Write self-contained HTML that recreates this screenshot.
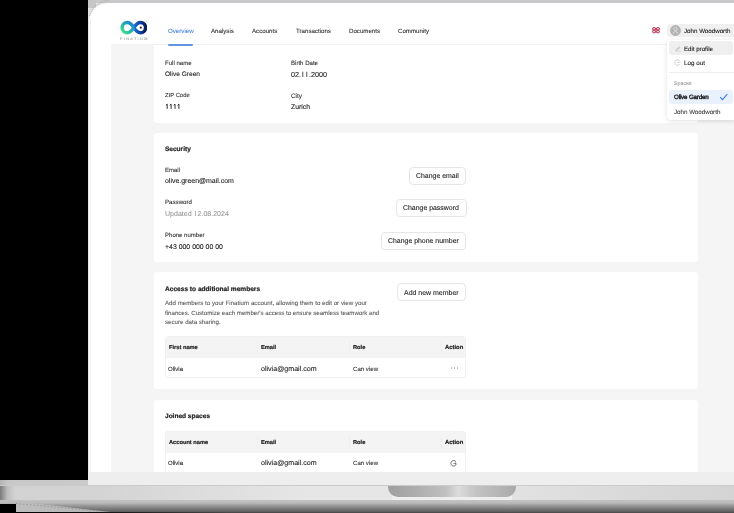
<!DOCTYPE html>
<html><head><meta charset="utf-8">
<style>
*{box-sizing:border-box}
html,body{margin:0;padding:0}
body{width:734px;height:513px;overflow:hidden;background:#000;position:relative;font-family:"Liberation Sans",sans-serif;color:#222}
.a{position:absolute}
.t{position:absolute;white-space:nowrap;line-height:1;will-change:transform;-webkit-text-stroke:0.1px currentColor;text-rendering:geometricPrecision}
.btn{background:#fff;border:1px solid #e6e6e6;border-radius:4px}
.tbl{position:absolute;left:165.4px;width:300.2px;border:1px solid #f0f0f0;border-radius:3px;background:#fff;overflow:hidden}
.th{position:absolute;left:0;top:0;width:100%;height:20.5px;background:#f4f4f4}
.cd{position:absolute;top:4px;width:1px;height:13px;background:#eeeeee}
.o{display:inline-block;width:0.556em;padding-left:0.15em}
</style></head><body>

<!-- laptop top frame -->
<div class="a" style="left:88px;top:0;width:26px;height:26px;background:#e2e2e2"></div>
<div class="a" style="left:88px;top:0;width:646px;height:3px;background:#c8c8ca"></div>
<div class="a" style="left:88px;top:0;width:8px;height:8px;background:#c6c6c6"></div>
<div class="a" style="left:0;top:480px;width:88px;height:6px;background:#c8c8c8"></div>

<!-- screen -->
<div class="a" style="left:88px;top:2.6px;width:660px;height:469.4px;background:#fff;border-top-left-radius:20px;border-left:1px solid #e6e6e6"></div>
<svg class="a" style="left:88px;top:0" width="24" height="20" viewBox="0 0 24 20"><path d="M1.5 16 Q5 3 21 0.3" fill="none" stroke="#9a9a9a" stroke-width="0.8" stroke-dasharray="1 1.2"/></svg>

<div class="a" style="left:89.6px;top:18px;width:1.6px;height:454px;background:#efefef"></div>
<!-- page bg -->
<div class="a" style="left:111px;top:45px;width:623px;height:427px;background:#f5f5f5"></div>

<!-- cards -->
<div class="a" style="left:154px;top:40px;width:544px;height:83px;background:#fff;border-radius:3px"></div>
<div class="a" style="left:154px;top:133px;width:544px;height:129px;background:#fff;border-radius:3px"></div>
<div class="a" style="left:154px;top:272px;width:544px;height:117px;background:#fff;border-radius:3px"></div>
<div class="a" style="left:154px;top:400px;width:544px;height:80px;background:#fff;border-radius:3px"></div>

<!-- tables -->
<div class="tbl" style="top:336.3px;height:42px"><div class="th"></div>
 <div class="cd" style="left:90.6px"></div><div class="cd" style="left:183px"></div><div class="cd" style="left:274.6px"></div>
 <div class="a" style="left:284.6px;top:30.2px;width:1.4px;height:1.4px;border-radius:50%;background:#b5b5b5;box-shadow:3px 0 #b5b5b5,6px 0 #b5b5b5"></div>
</div>
<div class="tbl" style="top:431.1px;height:60px"><div class="th"></div>
 <div class="cd" style="left:90.6px"></div><div class="cd" style="left:183px"></div><div class="cd" style="left:274.6px"></div>
</div>
<svg class="a" style="left:450.4px;top:459.6px" width="7" height="7" viewBox="0 0 7 7"><path d="M5.9 1.7 A2.75 2.75 0 1 0 6.2 4.4" fill="none" stroke="#555" stroke-width="0.85"/><path d="M3.5 3.5 H6.1 M5.3 2.7 L6.2 3.5 L5.3 4.3" fill="none" stroke="#555" stroke-width="0.7"/></svg>

<!-- nav -->
<div class="a" style="left:111px;top:3px;width:623px;height:42px;background:#fff;border-bottom:1px solid #f2f2f2"></div>
<div class="a" style="left:168px;top:44px;width:25.3px;height:2px;background:#6494e3;border-radius:1px"></div>

<!-- logo -->
<svg class="a" style="left:119.8px;top:20.05px" width="27.7" height="15.28" viewBox="0 0 29 16">
 <defs>
  <linearGradient id="gl" x1="0" y1="1" x2="1" y2="0"><stop offset="0" stop-color="#46e48a"/><stop offset="0.45" stop-color="#28b4a8"/><stop offset="1" stop-color="#1c78dc"/></linearGradient>
  <linearGradient id="gr" x1="0" y1="0" x2="1" y2="0"><stop offset="0" stop-color="#1b6ee0"/><stop offset="0.55" stop-color="#1040a8"/><stop offset="1" stop-color="#0a1a50"/></linearGradient>
 </defs>
 <path d="M14.5 8 C17 4.2 19 2.6 21.4 2.6 A5.4 5.4 0 0 1 21.4 13.4 C19 13.4 17 11.8 14.5 8" fill="none" stroke="url(#gr)" stroke-width="3.7"/>
 <path d="M14.5 8 C12 4.2 10 2.6 7.6 2.6 A5.4 5.4 0 0 0 7.6 13.4 C10 13.4 12 11.8 14.5 8" fill="none" stroke="url(#gl)" stroke-width="3.7"/>
 <circle cx="21.8" cy="8" r="1.15" fill="#2a2a2a"/>
</svg>
<div class="t" style="left:120.4px;top:37.5px;font-size:3.8px;letter-spacing:1.38px;color:#777;-webkit-text-stroke:0">FINATIUM</div>

<!-- flag -->
<svg class="a" style="left:652.2px;top:27.2px" width="8" height="6.4" viewBox="0 0 80 64"><g fill="#f6c2cb" stroke="#a8183a" stroke-width="9"><rect x="6" y="6" width="30" height="25" rx="10"/><rect x="44" y="6" width="30" height="25" rx="10"/><rect x="6" y="33" width="30" height="25" rx="10"/><rect x="44" y="33" width="30" height="25" rx="10"/></g></svg>

<!-- user pill -->
<div class="a" style="left:666.8px;top:23.6px;width:80px;height:13.5px;background:#f0f0f0;border-radius:4px"></div>
<svg class="a" style="left:670.2px;top:25px" width="11" height="11" viewBox="0 0 11 11"><circle cx="5.5" cy="5.5" r="5.4" fill="#b2b2b2"/><circle cx="5.5" cy="4.1" r="1.7" fill="none" stroke="#e6e6e6" stroke-width="0.75"/><path d="M2.9 8.9 Q3.4 6.6 5.5 6.6 Q7.6 6.6 8.1 8.9" fill="none" stroke="#e6e6e6" stroke-width="0.75"/></svg>

<!-- dropdown -->
<div class="a" style="left:667px;top:40px;width:70px;height:80px;background:#fff;border-radius:4px;box-shadow:0 1px 5px rgba(0,0,0,0.13)"></div>
<div class="a" style="left:669px;top:41px;width:63.6px;height:13.6px;background:#efefef;border-radius:3px"></div>
<svg class="a" style="left:673.5px;top:44.5px" width="8" height="7" viewBox="0 0 8 7"><path d="M1.4 6.1 L1.7 4.6 L5.2 1.1 L6.5 2.4 L3 5.9 Z" fill="#cfcfcf"/><path d="M1.2 6.3 H6.6" stroke="#cfcfcf" stroke-width="0.6"/></svg>
<svg class="a" style="left:674px;top:59px" width="7" height="7" viewBox="0 0 7 7"><path d="M6 2.2 A2.8 2.8 0 1 0 6 4.8" fill="none" stroke="#c4c4c4" stroke-width="0.75"/><path d="M3.4 3.5 H6.4" fill="none" stroke="#c4c4c4" stroke-width="0.75"/></svg>
<div class="a" style="left:669px;top:72px;width:65px;height:1px;background:#eeeeee"></div>
<div class="a" style="left:669px;top:90.4px;width:64px;height:13.4px;background:#e8f1fc;border-radius:3px"></div>
<svg class="a" style="left:719px;top:93px" width="9" height="8" viewBox="0 0 9 8"><path d="M1.2 4.2 L3.5 6.7 L8.3 1.2" fill="none" stroke="#3b7ddd" stroke-width="1.05"/></svg>

<div class="a btn" style="left:408.80px;top:166.70px;width:57.70px;height:18.00px"></div>
<div class="a btn" style="left:395.50px;top:199.00px;width:71.00px;height:18.00px"></div>
<div class="a btn" style="left:380.70px;top:231.70px;width:85.80px;height:18.00px"></div>
<div class="a btn" style="left:396.80px;top:282.70px;width:69.70px;height:18.00px"></div>
<svg class="a" style="left:0;top:0" width="200" height="120" viewBox="0 0 200 120"><path d="M165.90 105.3 L167.20 104.1 V108.9 M169.80 105.3 L171.10 104.1 V108.9 M173.70 105.3 L175.00 104.1 V108.9 M177.60 105.3 L178.90 104.1 V108.9 " fill="none" stroke="#222" stroke-width="0.95"/></svg>
<div class="t" style="left:168.00px;top:29.09px;font-size:6.15px;color:#4a86e0;font-weight:400;transform:scaleY(1.0);transform-origin:0 5.21px;">Overview</div>
<div class="t" style="left:211.00px;top:29.09px;font-size:6.15px;color:#333;font-weight:400;transform:scaleY(1.0);transform-origin:0 5.21px;">Analysis</div>
<div class="t" style="left:251.70px;top:29.09px;font-size:6.15px;color:#333;font-weight:400;transform:scaleY(1.0);transform-origin:0 5.21px;">Accounts</div>
<div class="t" style="left:295.90px;top:29.09px;font-size:6.15px;color:#333;font-weight:400;transform:scaleY(1.0);transform-origin:0 5.21px;">Transactions</div>
<div class="t" style="left:348.70px;top:29.09px;font-size:6.15px;color:#333;font-weight:400;transform:scaleY(1.0);transform-origin:0 5.21px;">Documents</div>
<div class="t" style="left:397.90px;top:29.09px;font-size:6.15px;color:#333;font-weight:400;transform:scaleY(1.0);transform-origin:0 5.21px;">Community</div>
<div class="t" style="left:684.40px;top:28.75px;font-size:6.20px;color:#222;font-weight:400;transform:scaleY(1.0);transform-origin:0 5.25px;">John Woodworth</div>
<div class="t" style="left:684.20px;top:46.90px;font-size:6.14px;color:#222;font-weight:400;transform:scaleY(1.0);transform-origin:0 5.20px;">Edit profile</div>
<div class="t" style="left:684.20px;top:60.68px;font-size:6.29px;color:#222;font-weight:400;transform:scaleY(1.0);transform-origin:0 5.32px;">Log out</div>
<div class="t" style="left:674.00px;top:82.11px;font-size:5.30px;color:#9a9a9a;font-weight:400;transform:scaleY(1.0);transform-origin:0 4.49px;">Spaces</div>
<div class="t" style="left:674.00px;top:95.15px;font-size:6.20px;color:#1a1a1a;font-weight:400;transform:scaleY(1.0);transform-origin:0 5.25px;-webkit-text-stroke:0.38px #1a1a1a;letter-spacing:-0.15px;">Olive Garden</div>
<div class="t" style="left:674.00px;top:109.75px;font-size:6.20px;color:#444;font-weight:400;transform:scaleY(1.0);transform-origin:0 5.25px;">John Woodworth</div>
<div class="t" style="left:165.00px;top:60.88px;font-size:6.05px;color:#333;font-weight:400;transform:scaleY(1.0);transform-origin:0 5.12px;">Full name</div>
<div class="t" style="left:165.00px;top:72.05px;font-size:6.56px;color:#222;font-weight:400;transform:scaleY(1.0);transform-origin:0 5.55px;">Olive Green</div>
<div class="t" style="left:291.20px;top:60.86px;font-size:6.07px;color:#333;font-weight:400;transform:scaleY(1.0);transform-origin:0 5.14px;">Birth Date</div>
<div class="t" style="left:291.20px;top:70.51px;font-size:7.20px;color:#222;font-weight:400;transform:scaleY(1.0);transform-origin:0 6.09px;">02.<span class=o>l</span><span class=o>l</span>.2000</div>
<div class="t" style="left:165.00px;top:94.03px;font-size:5.87px;color:#333;font-weight:400;transform:scaleY(1.0);transform-origin:0 4.97px;">ZIP Code</div>
<div class="t" style="left:291.20px;top:93.60px;font-size:6.38px;color:#333;font-weight:400;transform:scaleY(1.0);transform-origin:0 5.40px;">City</div>
<div class="t" style="left:291.20px;top:104.61px;font-size:6.84px;color:#222;font-weight:400;transform:scaleY(1.0);transform-origin:0 5.79px;">Zurich</div>
<div class="t" style="left:165.00px;top:146.96px;font-size:6.54px;color:#222;font-weight:700;transform:scaleY(1.0);transform-origin:0 5.54px;-webkit-text-stroke:0.2px currentColor;">Security</div>
<div class="t" style="left:165.00px;top:168.12px;font-size:6.00px;color:#333;font-weight:400;transform:scaleY(1.0);transform-origin:0 5.08px;">Email</div>
<div class="t" style="left:165.00px;top:179.01px;font-size:6.96px;color:#222;font-weight:400;transform:scaleY(1.0);transform-origin:0 5.89px;">olive.green@mail.com</div>
<div class="t" style="left:165.00px;top:199.89px;font-size:6.15px;color:#333;font-weight:400;transform:scaleY(1.0);transform-origin:0 5.21px;">Password</div>
<div class="t" style="left:165.00px;top:211.43px;font-size:7.05px;color:#9a9a9a;font-weight:400;transform:scaleY(1.0);transform-origin:0 5.97px;">Updated <span class=o>l</span>2.08.2024</div>
<div class="t" style="left:165.00px;top:233.49px;font-size:6.04px;color:#333;font-weight:400;transform:scaleY(1.0);transform-origin:0 5.11px;">Phone number</div>
<div class="t" style="left:165.00px;top:244.93px;font-size:6.93px;color:#222;font-weight:400;transform:scaleY(1.0);transform-origin:0 5.87px;">+43 000 000 00 00</div>
<div class="t" style="left:165.00px;top:287.03px;font-size:6.58px;color:#222;font-weight:700;transform:scaleY(1.0);transform-origin:0 5.57px;-webkit-text-stroke:0.2px currentColor;">Access to additional members</div>
<div class="t" style="left:165.00px;top:300.79px;font-size:6.16px;color:#5e5e5e;font-weight:400;transform:scaleY(1.0);transform-origin:0 5.21px;">Add members to your Finatium account, allowing them to edit or view your</div>
<div class="t" style="left:165.00px;top:310.51px;font-size:6.13px;color:#5e5e5e;font-weight:400;transform:scaleY(1.0);transform-origin:0 5.19px;">finances. Customize each member's access to ensure seamless teamwork and</div>
<div class="t" style="left:165.00px;top:319.99px;font-size:6.15px;color:#5e5e5e;font-weight:400;transform:scaleY(1.0);transform-origin:0 5.21px;">secure data sharing.</div>
<div class="t" style="left:168.70px;top:346.47px;font-size:5.70px;color:#222;font-weight:700;transform:scaleY(1.0);transform-origin:0 4.83px;-webkit-text-stroke:0.2px currentColor;">First name</div>
<div class="t" style="left:260.70px;top:346.47px;font-size:5.70px;color:#222;font-weight:700;transform:scaleY(1.0);transform-origin:0 4.83px;-webkit-text-stroke:0.2px currentColor;">Email</div>
<div class="t" style="left:352.70px;top:346.47px;font-size:5.70px;color:#222;font-weight:700;transform:scaleY(1.0);transform-origin:0 4.83px;-webkit-text-stroke:0.2px currentColor;">Role</div>
<div class="t" style="left:444.90px;top:346.32px;font-size:5.88px;color:#222;font-weight:700;transform:scaleY(1.0);transform-origin:0 4.98px;-webkit-text-stroke:0.2px currentColor;">Action</div>
<div class="t" style="left:167.90px;top:366.52px;font-size:6.00px;color:#2a2a2a;font-weight:400;transform:scaleY(1.0);transform-origin:0 5.08px;">Olivia</div>
<div class="t" style="left:260.70px;top:365.71px;font-size:7.08px;color:#222;font-weight:400;transform:scaleY(1.0);transform-origin:0 5.99px;">olivia@gmail.com</div>
<div class="t" style="left:352.70px;top:366.54px;font-size:6.10px;color:#333;font-weight:400;transform:scaleY(1.0);transform-origin:0 5.16px;">Can view</div>
<div class="t" style="left:165.00px;top:414.06px;font-size:6.54px;color:#222;font-weight:700;transform:scaleY(1.0);transform-origin:0 5.54px;-webkit-text-stroke:0.2px currentColor;">Joined spaces</div>
<div class="t" style="left:168.70px;top:441.07px;font-size:5.70px;color:#222;font-weight:700;transform:scaleY(1.0);transform-origin:0 4.83px;-webkit-text-stroke:0.2px currentColor;">Account name</div>
<div class="t" style="left:260.70px;top:441.07px;font-size:5.70px;color:#222;font-weight:700;transform:scaleY(1.0);transform-origin:0 4.83px;-webkit-text-stroke:0.2px currentColor;">Email</div>
<div class="t" style="left:352.70px;top:441.07px;font-size:5.70px;color:#222;font-weight:700;transform:scaleY(1.0);transform-origin:0 4.83px;-webkit-text-stroke:0.2px currentColor;">Role</div>
<div class="t" style="left:444.90px;top:440.92px;font-size:5.88px;color:#222;font-weight:700;transform:scaleY(1.0);transform-origin:0 4.98px;-webkit-text-stroke:0.2px currentColor;">Action</div>
<div class="t" style="left:167.90px;top:461.12px;font-size:6.00px;color:#2a2a2a;font-weight:400;transform:scaleY(1.0);transform-origin:0 5.08px;">Olivia</div>
<div class="t" style="left:260.70px;top:460.31px;font-size:7.08px;color:#222;font-weight:400;transform:scaleY(1.0);transform-origin:0 5.99px;">olivia@gmail.com</div>
<div class="t" style="left:352.70px;top:461.14px;font-size:6.10px;color:#333;font-weight:400;transform:scaleY(1.0);transform-origin:0 5.16px;">Can view</div>
<div class="t" style="left:416.20px;top:173.83px;font-size:6.93px;color:#222;font-weight:400;transform:scaleY(1.0);transform-origin:0 5.87px;">Change email</div>
<div class="t" style="left:402.90px;top:206.13px;font-size:6.93px;color:#222;font-weight:400;transform:scaleY(1.0);transform-origin:0 5.87px;">Change password</div>
<div class="t" style="left:388.10px;top:238.83px;font-size:6.93px;color:#222;font-weight:400;transform:scaleY(1.0);transform-origin:0 5.87px;">Change phone number</div>
<div class="t" style="left:404.20px;top:289.79px;font-size:6.98px;color:#222;font-weight:400;transform:scaleY(1.0);transform-origin:0 5.91px;">Add new member</div>

<!-- base -->
<div class="a" style="left:88px;top:472px;width:646px;height:14px;background:#eeeeee"></div>
<div class="a" style="left:0;top:480px;width:88px;height:6px;background:linear-gradient(90deg,#b4b4b4,#c8c8c8 10%,#cacaca)"></div>
<div class="a" style="left:0;top:485px;width:734px;height:1px;background:#cbcbcb"></div>
<div class="a" style="left:0;top:486px;width:734px;height:14px;background:linear-gradient(90deg,#7a7a7a 0,#bdbdbd 1%,#d2d2d2 2%,#d4d4d4 14%,#e6e6e6 42%,#e6e6e6 62%,#d8d8d8 88%,#d4d4d4 100%)"></div>
<div class="a" style="left:0;top:500px;width:734px;height:13px;background:linear-gradient(#c2c2c2 0,#b9b9b9 24%,#a0a0a0 38%,#868686 58%,#6a6a6a 80%,#54575a 100%)"></div>
<svg class="a" style="left:0;top:500px" width="200" height="13" viewBox="0 0 200 13"><defs><linearGradient id="bl" x1="0" y1="0" x2="1" y2="0"><stop offset="0" stop-color="#bebebe"/><stop offset="1" stop-color="#b4b4b4"/></linearGradient></defs><polygon points="16,3 30,3 110,12 16,12" fill="url(#bl)"/><polyline points="16,3.5 110,12" fill="none" stroke="#8a8a8a" stroke-width="0.7" stroke-dasharray="1.5 2"/></svg>
<div class="a" style="left:0;top:504px;width:16px;height:9px;background:#000"></div>
<div class="a" style="left:16px;top:512px;width:718px;height:1px;background:linear-gradient(90deg,#000 0,#111 12%,#4a4a4a 30%,#505050 100%)"></div>
<div class="a" style="left:392px;top:496px;width:120px;height:4px;background:#eeeeee"></div>
<div class="a" style="left:388px;top:486px;width:128px;height:11px;background:linear-gradient(90deg,#a0a0a0,#acacac 20%,#c0c0c0 45%,#dcdcdc 55%,#c4c4c4 68%,#b4b4b4 88%,#aaaaaa);border-radius:0 0 10px 10px / 0 0 10px 10px"></div>

</body></html>
